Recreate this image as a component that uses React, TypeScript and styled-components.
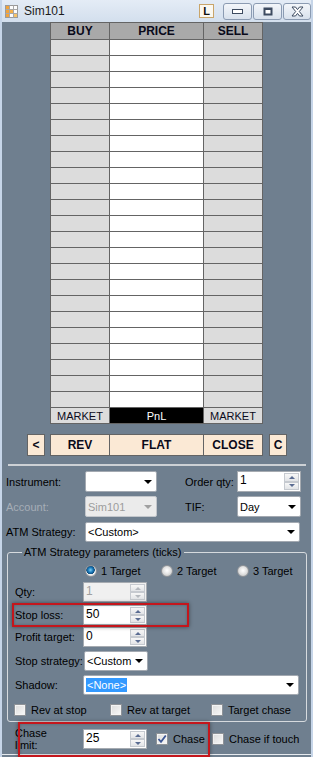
import React from 'react';
import styled, { createGlobalStyle } from 'styled-components';

const GlobalStyle = createGlobalStyle`
  html, body {
    margin: 0;
    padding: 0;
    background: #6f7f8f;
  }
  body {
    font-family: "Liberation Sans", Arial, sans-serif;
    font-size: 11px;
    color: #000;
  }
  * {
    box-sizing: border-box;
  }
`;

const ROWS = Array.from({ length: 23 }, (_, i) => i);

const TitleIcon = () => (
  <svg width="13" height="13" viewBox="0 0 13 13">
    <rect x="0.5" y="0.5" width="12" height="12" fill="#fdfdfd" stroke="#9a9a9a" />
    <rect x="1" y="1" width="3.5" height="11" fill="#f2a33a" />
    <rect x="5" y="5" width="3" height="3" fill="#f4b04a" />
    <rect x="9" y="9" width="3" height="3" fill="#f7c46a" />
    <path d="M4.5 0.5v12M8.5 0.5v12M0.5 4.5h12M0.5 8.5h12" stroke="#a8a8a8" strokeWidth="1" />
  </svg>
);

const MinGlyph = () => (
  <svg width="11" height="5" viewBox="0 0 11 5">
    <rect x="0.5" y="0.5" width="10" height="4" fill="#fff" stroke="#3d4b60" />
  </svg>
);

const MaxGlyph = () => (
  <svg width="10" height="9" viewBox="0 0 10 9">
    <rect x="0.5" y="0.5" width="9" height="8" fill="#3d4b60" />
    <rect x="2.5" y="3" width="5" height="3.5" fill="#fff" />
  </svg>
);

const CloseGlyph = () => (
  <svg width="13" height="11" viewBox="0 0 13 11">
    <path
      d="M1 1 L4.5 1 L6.5 3.6 L8.5 1 L12 1 L8.3 5.5 L12 10 L8.5 10 L6.5 7.4 L4.5 10 L1 10 L4.7 5.5 Z"
      fill="#fff"
      stroke="#3d4b60"
      strokeWidth="1"
      strokeLinejoin="round"
    />
  </svg>
);

const CheckGlyph = () => (
  <svg width="10" height="10" viewBox="0 0 10 10">
    <path d="M1.5 5 L4 7.8 L8.8 1.5" fill="none" stroke="#3c5694" strokeWidth="1.8" />
  </svg>
);

const Combo = ({ width, value, disabled, selected }: { width: number; value: string; disabled?: boolean; selected?: boolean }) => (
  <ComboBox $w={width} $disabled={disabled}>
    <ComboText $selected={selected}>{value}</ComboText>
    <ComboArrow $disabled={disabled} />
  </ComboBox>
);

const Spinner = ({ width, value, disabled }: { width: number; value: string; disabled?: boolean }) => (
  <SpinBox $w={width} $disabled={disabled}>
    <SpinText>{value}</SpinText>
    <SpinButtons>
      <SpinHalf>
        <SpinArrow $up $disabled={disabled} />
      </SpinHalf>
      <SpinHalf>
        <SpinArrow $disabled={disabled} />
      </SpinHalf>
    </SpinButtons>
  </SpinBox>
);

const Check = ({ label, width, checked }: { label: string; width: number; checked?: boolean }) => (
  <CheckItem $w={width}>
    <CheckBox>{checked && <CheckGlyph />}</CheckBox>
    <span>{label}</span>
  </CheckItem>
);

const Radio = ({ label, checked }: { label: string; checked?: boolean }) => (
  <RadioItem>
    <RadioDot $checked={checked} />
    <span>{label}</span>
  </RadioItem>
);

const App = () => {
  return (
    <>
      <GlobalStyle />
      <Window>
        <TitleBar>
          <TitleIcon />
          <TitleText>Sim101</TitleText>
          <TitleTools>
            <LBox>L</LBox>
            <CaptionButton $w={29}>
              <MinGlyph />
            </CaptionButton>
            <CaptionButton $w={29}>
              <MaxGlyph />
            </CaptionButton>
            <CaptionButton $w={28}>
              <CloseGlyph />
            </CaptionButton>
          </TitleTools>
        </TitleBar>

        <Ladder>
          <Cell $tone="head">BUY</Cell>
          <Cell $tone="head">PRICE</Cell>
          <Cell $tone="head">SELL</Cell>
          {ROWS.map((i) => (
            <React.Fragment key={i}>
              <Cell $tone="side" />
              <Cell $tone="price" />
              <Cell $tone="side" />
            </React.Fragment>
          ))}
          <Cell $tone="market">MARKET</Cell>
          <Cell $tone="pnl">PnL</Cell>
          <Cell $tone="market">MARKET</Cell>
        </Ladder>

        <ActionRow>
          <SideButton>&lt;</SideButton>
          <ButtonGroup>
            <ActionButton>REV</ActionButton>
            <ActionButton>FLAT</ActionButton>
            <ActionButton>CLOSE</ActionButton>
          </ButtonGroup>
          <SideButton $ml={1}>C</SideButton>
        </ActionRow>

        <Separator />

        <Form>
          <Row $h={21} $mt={0}>
            <Label $w={79}>Instrument:</Label>
            <Combo width={72} value="" />
            <Label $w={52} $ml={28}>Order qty:</Label>
            <Spinner width={64} value="1" />
          </Row>
          <Row $h={21} $mt={4}>
            <Label $w={79} $disabled>Account:</Label>
            <Combo width={72} value="Sim101" disabled />
            <Label $w={52} $ml={28}>TIF:</Label>
            <Combo width={64} value="Day" />
          </Row>
          <Row $h={20} $mt={5}>
            <Label $w={79}>ATM Strategy:</Label>
            <Combo width={215} value="<Custom>" />
          </Row>

          <Group>
            <Legend>ATM Strategy parameters (ticks)</Legend>
            <Row $h={14} $mt={5}>
              <Label $w={70} />
              <Radio label="1 Target" checked />
              <Radio label="2 Target" />
              <Radio label="3 Target" />
            </Row>
            <Row $h={20} $mt={4}>
              <Label $w={68}>Qty:</Label>
              <Spinner width={64} value="1" disabled />
            </Row>
            <Row $h={20} $mt={3}>
              <Label $w={68}>Stop loss:</Label>
              <Spinner width={64} value="50" />
              <Mark $left={-3} $top={-2} $width={177} $height={24} />
            </Row>
            <Row $h={20} $mt={2}>
              <Label $w={68}>Profit target:</Label>
              <Spinner width={64} value="0" />
            </Row>
            <Row $h={20} $mt={4}>
              <Label $w={69}>Stop strategy:</Label>
              <Combo width={64} value="<Custom" />
            </Row>
            <Row $h={20} $mt={4}>
              <Label $w={68}>Shadow:</Label>
              <Combo width={216} value="<None>" selected />
            </Row>
            <Row $h={14} $mt={8} $ml={-1}>
              <Check label="Rev at stop" width={96} />
              <Check label="Rev at target" width={101} />
              <Check label="Target chase" width={90} />
            </Row>
          </Group>

          <Row $h={20} $mt={7} $ml={9}>
            <Label $w={68}>
              <TwoLine>
                Chase
                <br />
                limit:
              </TwoLine>
            </Label>
            <Spinner width={64} value="25" />
            <Gap $w={9} />
            <Check label="Chase" width={56} checked />
            <Check label="Chase if touch" width={90} />
            <Mark $left={3} $top={-7} $width={192} $height={35} />
          </Row>
          <BottomEdge />
        </Form>
      </Window>
    </>
  );
};

export default App;

const Window = styled.div`
  width: 313px;
  height: 757px;
  overflow: hidden;
  display: flex;
  flex-direction: column;
  background: #6f7f8f;
  border-left: 2px solid #c6d5e8;
  border-right: 2px solid #c6d5e8;
`;

const TitleBar = styled.div`
  height: 22px;
  flex: none;
  display: flex;
  align-items: center;
  padding-left: 3px;
  background: linear-gradient(#e4ecf6, #d3dfed);
`;

const TitleText = styled.span`
  margin-left: 6px;
  font-size: 12px;
  color: #1c1c1c;
`;

const TitleTools = styled.div`
  margin-left: auto;
  display: flex;
  align-items: center;
  gap: 1px;
`;

const LBox = styled.div`
  width: 15px;
  height: 14px;
  margin-right: 8px;
  display: flex;
  align-items: center;
  justify-content: center;
  font-size: 11px;
  font-weight: bold;
  color: #111;
  background: #fbf8f0;
  border: 1px solid #c9a56a;
`;

const CaptionButton = styled.div<{ $w: number }>`
  width: ${(p) => p.$w}px;
  height: 17px;
  display: flex;
  align-items: center;
  justify-content: center;
  border: 1px solid #8b9bb2;
  border-radius: 3px;
  background: linear-gradient(#f3f6fa, #d8e1ec);
`;

const Ladder = styled.div`
  align-self: center;
  flex: none;
  display: grid;
  grid-template-columns: 58px 93px 58px;
  grid-template-rows: 16px;
  grid-auto-rows: 15px;
  gap: 1px;
  padding: 1px;
  background: #646464;
`;

const cellBg = {
  head: '#a9a9a9',
  side: '#dcdcdc',
  price: '#ffffff',
  market: '#dcdcdc',
  pnl: '#000000',
};

const Cell = styled.div<{ $tone: keyof typeof cellBg }>`
  display: flex;
  align-items: center;
  justify-content: center;
  background: ${(p) => cellBg[p.$tone]};
  color: ${(p) => (p.$tone === 'pnl' ? '#fff' : '#0a0a1a')};
  font-size: ${(p) => (p.$tone === 'head' ? '12px' : '11px')};
  font-weight: ${(p) => (p.$tone === 'head' ? 'bold' : 'normal')};
`;

const ActionRow = styled.div`
  display: flex;
  height: 22px;
  gap: 5px;
  margin: 10px 0 0 25px;
  flex: none;
`;

const ButtonGroup = styled.div`
  display: grid;
  grid-template-columns: 58px 93px 58px;
  gap: 1px;
  padding: 1px;
  background: #646464;
`;

const ActionButton = styled.div`
  display: flex;
  align-items: center;
  justify-content: center;
  background: #fbe9d5;
  font-size: 12px;
  font-weight: bold;
  color: #0a0a1a;
`;

const SideButton = styled(ActionButton)<{ $ml?: number }>`
  width: 18px;
  margin-left: ${(p) => p.$ml ?? 0}px;
  border: 1px solid #646464;
`;

const Separator = styled.div`
  height: 2px;
  margin: 8px 5px 0 6px;
  flex: none;
  background: #cdd1d5;
`;

const Form = styled.div`
  display: flex;
  flex-direction: column;
  padding: 5px 0 0 4px;
`;

const Row = styled.div<{ $h: number; $mt: number; $ml?: number }>`
  position: relative;
  display: flex;
  align-items: center;
  height: ${(p) => p.$h}px;
  margin-top: ${(p) => p.$mt}px;
  margin-left: ${(p) => p.$ml ?? 0}px;
  flex: none;
`;

const Label = styled.span<{ $w: number; $ml?: number; $disabled?: boolean }>`
  width: ${(p) => p.$w}px;
  margin-left: ${(p) => p.$ml ?? 0}px;
  flex: none;
  white-space: nowrap;
  color: ${(p) => (p.$disabled ? '#a6aeb7' : '#000')};
`;

const TwoLine = styled.span`
  display: block;
  line-height: 12px;
`;

const Gap = styled.span<{ $w: number }>`
  width: ${(p) => p.$w}px;
  flex: none;
`;

const ComboBox = styled.div<{ $w: number; $disabled?: boolean }>`
  width: ${(p) => p.$w}px;
  height: 100%;
  flex: none;
  display: flex;
  align-items: center;
  gap: 2px;
  padding: 0 4px 0 2px;
  background: ${(p) => (p.$disabled ? '#ebebeb' : '#fff')};
  color: ${(p) => (p.$disabled ? '#9c9c9c' : '#000')};
  border: 1px solid ${(p) => (p.$disabled ? '#c2c6cb' : '#a3a9b1')};
  border-radius: 2px;
  font-size: 11px;
`;

const ComboText = styled.span<{ $selected?: boolean }>`
  flex: 1;
  min-width: 0;
  white-space: nowrap;
  overflow: hidden;
  ${(p) =>
    p.$selected
      ? `flex: none; background: #3399ff; color: #fff; padding: 1px 1px;`
      : ''}
`;

const ComboArrow = styled.span<{ $disabled?: boolean }>`
  margin-left: auto;
  width: 0;
  height: 0;
  flex: none;
  border-left: 4px solid transparent;
  border-right: 4px solid transparent;
  border-top: 4px solid ${(p) => (p.$disabled ? '#a0a0a0' : '#000')};
`;

const SpinBox = styled.div<{ $w: number; $disabled?: boolean }>`
  width: ${(p) => p.$w}px;
  height: 100%;
  flex: none;
  display: flex;
  background: ${(p) => (p.$disabled ? '#f0f0f0' : '#fff')};
  color: ${(p) => (p.$disabled ? '#a0a0a0' : '#000')};
  border: 1px solid #a6abb1;
  font-size: 12px;
`;

const SpinText = styled.span`
  flex: 1;
  padding: 1px 2px;
  line-height: 15px;
`;

const SpinButtons = styled.div`
  width: 15px;
  display: flex;
  flex-direction: column;
  margin: 1px;
`;

const SpinHalf = styled.div`
  flex: 1;
  display: flex;
  align-items: center;
  justify-content: center;
  background: linear-gradient(#f7f7f7, #e2e4e7);
  border: 1px solid #c6cad0;
`;

const SpinArrow = styled.span<{ $up?: boolean; $disabled?: boolean }>`
  width: 0;
  height: 0;
  border-left: 3px solid transparent;
  border-right: 3px solid transparent;
  ${(p) => (p.$up ? 'border-bottom' : 'border-top')}: 3px solid ${(p) => (p.$disabled ? '#b4b8be' : '#5a6c92')};
`;

const RadioItem = styled.div`
  width: 76px;
  flex: none;
  display: flex;
  align-items: center;
  gap: 4px;
  font-size: 11px;
  color: #000;
`;

const RadioDot = styled.span<{ $checked?: boolean }>`
  width: 12px;
  height: 12px;
  flex: none;
  border-radius: 50%;
  border: 1px solid #8e9297;
  background: ${(p) =>
    p.$checked
      ? 'radial-gradient(circle at 45% 40%, #7fd0f5 0, #1a78b8 2.5px, #0f4f80 4px, #f2f2f2 4.5px, #dcdcdc 6px)'
      : 'radial-gradient(circle at 50% 45%, #ffffff 0, #e8e8e8 3px, #c9c9c9 6px)'};
`;

const CheckItem = styled.div<{ $w: number }>`
  width: ${(p) => p.$w}px;
  flex: none;
  display: flex;
  align-items: center;
  gap: 5px;
  font-size: 11px;
  white-space: nowrap;
`;

const CheckBox = styled.span`
  width: 12px;
  height: 12px;
  flex: none;
  display: flex;
  align-items: center;
  justify-content: center;
  border: 1px solid #8e9297;
  background: linear-gradient(135deg, #dcdcdc, #f8f8f8);
  box-shadow: inset 0 0 0 1px #f4f4f4;
`;

const Group = styled.fieldset`
  width: 300px;
  margin: 4px 0 0 1px;
  padding: 0 0 4px 7px;
  border: 1px solid #d6dade;
  border-radius: 3px;
  min-inline-size: 0;
`;

const Legend = styled.legend`
  margin-left: 7px;
  padding: 0 2px;
  font-size: 11px;
  line-height: 13px;
  color: #000;
`;

const Mark = styled.span<{ $left: number; $top: number; $width: number; $height: number }>`
  position: absolute;
  left: ${(p) => p.$left}px;
  top: ${(p) => p.$top}px;
  width: ${(p) => p.$width}px;
  height: ${(p) => p.$height}px;
  border: 2px solid #c4161c;
  box-shadow: 0 0 4px rgba(0, 0, 0, 0.45), inset 0 0 3px rgba(0, 0, 0, 0.25);
  pointer-events: none;
  z-index: 2;
`;

const BottomEdge = styled.div`
  height: 1px;
  margin: 5px 0 0 -4px;
  background: #e6eaee;
`;
